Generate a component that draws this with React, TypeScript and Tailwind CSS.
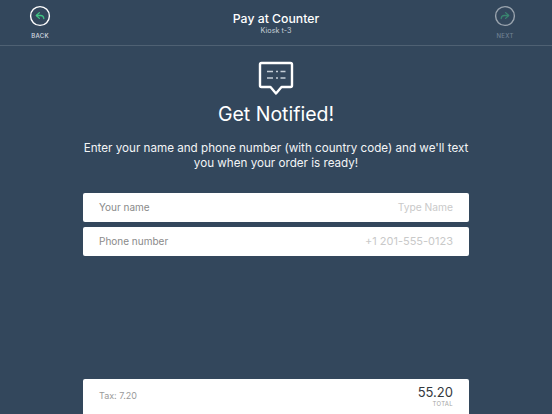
import React from "react";

function ArrowCircle({ flip, dim }: { flip?: boolean; dim?: boolean }) {
  return (
    <svg width="22" height="22" viewBox="0 0 22 22" fill="none" className={dim ? "opacity-50" : ""}>
      <circle cx="11" cy="11" r="9.4" stroke="#ffffff" strokeWidth="1.4" />
      <g transform={flip ? "translate(22 0) scale(-1 1)" : undefined} stroke="#3fc482" strokeWidth="1.3" strokeLinecap="round" strokeLinejoin="round">
        <path d="M10.4 7.6 7.3 10.5l3.1 2.9" />
        <path d="M7.5 10.5h4.300c1.700 0 2.800 1 3 3" />
      </g>
    </svg>
  );
}

export default function App() {
  return (
    <div className="w-[552px] h-[414px] overflow-hidden bg-[#33475c] flex flex-col font-['Inter','Liberation_Sans',sans-serif] text-white">
      <header className="h-[46px] shrink-0 border-b border-[#4f6173] flex items-start pl-[29px] pr-[36px]">
        <div className="flex-1 flex justify-start">
          <div className="flex flex-col items-center w-[22px] pt-[5px]">
            <ArrowCircle />
            <span className="mt-[5px] text-[6px] leading-[8px] tracking-[0.3px] font-medium text-[#d5dbe1]">BACK</span>
          </div>
        </div>
        <div className="flex flex-col items-center pt-[11px] ml-[7px]">
          <span className="text-[12.250px] leading-[16px] font-medium">Pay at Counter</span>
          <span className="text-[7.250px] leading-[8px] text-[#c5ced6]">Kiosk t-3</span>
        </div>
        <div className="flex-1 flex justify-end">
          <div className="flex flex-col items-center w-[22px] pt-[5px]">
            <ArrowCircle flip dim />
            <span className="mt-[5px] text-[6px] leading-[8px] tracking-[0.3px] font-medium text-[#6f8092]">NEXT</span>
          </div>
        </div>
      </header>

      <main className="flex-1 flex flex-col items-center min-h-0 pt-[15px]">
        <svg width="36" height="36" viewBox="0 0 36 36" fill="none">
          <path d="M3.500 2h29a1.500 1.500 0 0 1 1.500 1.500v21a1.500 1.500 0 0 1-1.500 1.500H23.500L18 32.500 12.500 26H3.500A1.500 1.500 0 0 1 2 24.500v-21A1.500 1.500 0 0 1 3.500 2Z" stroke="#fff" strokeWidth="2.400" strokeLinejoin="round" />
          <path d="M9 10.500h6M18 10.500h2M22.500 10.500h5M9 17h6M18 17h2M22.500 17h5" stroke="#c5ced6" strokeWidth="1.300" />
        </svg>
        <h1 className="mt-[4px] text-[19.500px] leading-[27px] font-normal">Get Notified!</h1>
        <p className="mt-[13px] w-[400px] text-center text-[11.650px] leading-[15px] text-[#f2f4f6]">
          Enter your name and phone number (with country code) and we'll text you when your order is ready!
        </p>

        <div className="mt-[22px] w-[386px] flex flex-col gap-[5px]">
          <div className="h-[29px] bg-white rounded-[2px] flex items-center justify-between px-[16px] text-[10px]">
            <span className="text-[#8a8a8a]">Your name</span>
            <span className="text-[10.250px] text-[#c9c9c9]">Type Name</span>
          </div>
          <div className="h-[29px] bg-white rounded-[2px] flex items-center justify-between px-[16px] text-[10px]">
            <span className="text-[#8a8a8a]">Phone number</span>
            <span className="text-[11px] text-[#c9c9c9]">+1 201-555-0123</span>
          </div>
        </div>

        <div className="mt-auto w-[386px] h-[35px] shrink-0 bg-white rounded-t-[2px] flex items-start justify-between px-[16px] pt-[5px]">
          <span className="mt-[6px] text-[9px] leading-[12px] text-[#9a9a9a]">Tax: 7.20</span>
          <div className="flex flex-col items-end">
            <span className="text-[13px] leading-[16px] font-normal text-[#33383d]">55.20</span>
            <span className="text-[6px] leading-[8px] tracking-[0.3px] text-[#a5a5a5]">TOTAL</span>
          </div>
        </div>
      </main>
    </div>
  );
}
